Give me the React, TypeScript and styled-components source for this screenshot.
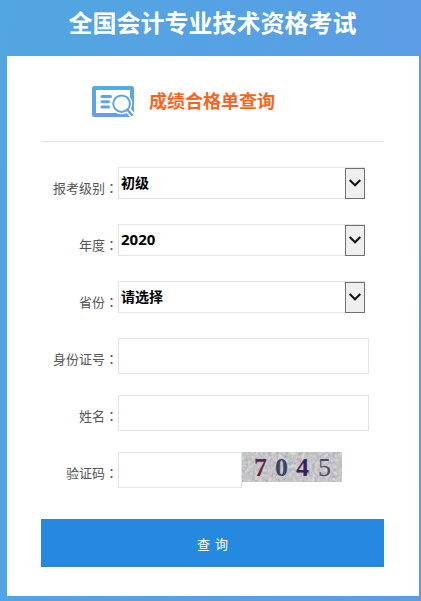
import styled, { createGlobalStyle } from 'styled-components';
import { useState } from 'react';

const GlobalStyle = createGlobalStyle`
  * {
    box-sizing: border-box;
  }
  body {
    margin: 0;
    font-family: 'Noto Sans CJK SC', sans-serif;
  }
`;

const Wrapper = styled.div`
  width: 421px;
  height: 601px;
  padding: 0 2px 0 7px;
  overflow: hidden;
  background: linear-gradient(100deg, #52a6e1 0%, #56a1e4 50%, #5f9ae7 100%);
`;

const Title = styled.h1`
  height: 56px;
  margin: 0;
  padding-right: 1px;
  font-size: 24px;
  font-weight: 700;
  line-height: 44px;
  text-align: center;
  color: #fff;
`;

const Card = styled.form`
  height: 540px;
  padding: 0 35px 0 34px;
  background-color: #fff;
`;

const Header = styled.header`
  display: flex;
  align-items: flex-start;
  gap: 15px;
  height: 86px;
  padding: 30px 0 0 51px;
  border-bottom: 1px solid #e3e3e3;
`;

const Subtitle = styled.h2`
  margin: 0;
  font-size: 18px;
  font-weight: 700;
  line-height: 28px;
  color: #f9651f;
`;

const Fields = styled.div`
  display: flex;
  flex-direction: column;
  gap: 21px;
  padding-top: 25px;
`;

const Row = styled.div`
  display: flex;
  align-items: flex-start;
  height: 36px;
`;

const Label = styled.label`
  flex: none;
  width: 77px;
  font-size: 13px;
  line-height: 41px;
  text-align: right;
  color: #555;
`;

const Colon = styled.span`
  font-family: 'Noto Sans CJK JP', sans-serif;
`;

const SelectBox = styled.div`
  display: flex;
  width: 247px;
  height: 32px;
  border: 1px solid #e3e3e3;
  border-right: none;
`;

const Select = styled.select`
  flex: 1;
  padding: 0 0 2px 2px;
  border: none;
  appearance: none;
  background: none;
  font-family: 'Noto Sans', 'Noto Sans CJK SC', sans-serif;
  font-size: ${(props: { $latin?: boolean }) => (props.$latin ? 15 : 14)}px;
  font-weight: 700;
  color: #000;
`;

const Arrow = styled.span`
  display: flex;
  justify-content: center;
  align-items: center;
  width: 20px;
  height: 31px;
  padding-bottom: 2px;
  border: 1px solid #707070;
  background-color: #efefef;
  pointer-events: none;
`;

const Input = styled.input<{ $width: number }>`
  width: ${(props) => props.$width}px;
  height: 36px;
  padding: 0 4px;
  border: 1px solid #e3e3e3;
  outline: none;
  font-size: 14px;
`;

const Captcha = styled.svg`
  display: block;
  width: 100px;
  height: 30px;
  font-family: 'Liberation Serif', serif;
  font-size: 26px;
`;

const Button = styled.button`
  display: block;
  width: 100%;
  height: 48px;
  margin-top: 31px;
  padding: 1px 0 0;
  border: none;
  border-bottom: 1px solid #3b7fb8;
  background-color: #2489df;
  font-family: 'Noto Sans CJK SC', sans-serif;
  font-size: 13px;
  word-spacing: 2px;
  color: #fff;
`;

const digits = [
  { value: '7', x: 12, color: '#5b2748', weight: 700 },
  { value: '0', x: 33, color: '#3a4660', weight: 700 },
  { value: '4', x: 54, color: '#38205f', weight: 700 },
  { value: '5', x: 76, color: '#554560', weight: 400 },
];

const selects = [
  { id: 'level', label: '报考级别', options: ['初级', '中级', '高级'] },
  { id: 'year', label: '年度', options: ['2020', '2019'], latin: true },
  { id: 'province', label: '省份', options: ['请选择'] },
];

function SearchIcon() {
  return (
    <svg width="42" height="32" viewBox="0 0 42 32" fill="none">
      <defs>
        <linearGradient id="card" gradientUnits="userSpaceOnUse" x1="0" y1="0" x2="0" y2="32">
          <stop offset="0" stopColor="#50ade0" />
          <stop offset="1" stopColor="#6c9be6" />
        </linearGradient>
      </defs>
      <rect x="2" y="2" width="38" height="27" rx="0.5" stroke="url(#card)" strokeWidth="4" />
      <g fill="url(#card)">
        <rect x="8.5" y="9" width="11.5" height="3" rx="1.5" />
        <rect x="8.5" y="14.3" width="9.5" height="3" rx="1.5" />
        <rect x="8.5" y="19.6" width="9.5" height="3" rx="1.5" />
      </g>
      <circle cx="29.6" cy="17.7" r="10.6" fill="#fff" />
      <path d="M35 23l7 8" stroke="#fff" strokeWidth="6" />
      <circle cx="29.6" cy="17.7" r="8.3" stroke="url(#card)" strokeWidth="2" />
      <path d="M35.5 24l5 5.5" stroke="url(#card)" strokeWidth="2.4" />
    </svg>
  );
}

function CaptchaImage() {
  return (
    <Captcha viewBox="0 0 100 30">
      <filter id="noise" x="0" y="0" width="100%" height="100%" colorInterpolationFilters="sRGB">
        <feTurbulence type="fractalNoise" baseFrequency="0.3" numOctaves="2" seed="4" />
        <feColorMatrix values="0.3 0.15 0 0 0.55  0.12 0.3 0 0 0.56  0.12 0.12 0.2 0 0.56  0 0 0 0 1" />
      </filter>
      <rect width="100" height="30" filter="url(#noise)" />
      {digits.map((digit) => (
        <text key={digit.value} x={digit.x} y="24" fill={digit.color} fontWeight={digit.weight}>
          {digit.value}
        </text>
      ))}
    </Captcha>
  );
}

function App() {
  const [form, setForm] = useState<Record<string, string>>({});
  const change = (id: string, value: string) => setForm((prev) => ({ ...prev, [id]: value }));
  return (
    <Wrapper>
      <GlobalStyle />
      <Title>全国会计专业技术资格考试</Title>
      <Card onSubmit={(e) => e.preventDefault()}>
        <Header>
          <SearchIcon />
          <Subtitle>成绩合格单查询</Subtitle>
        </Header>
        <Fields>
          {selects.map(({ id, label, options, latin }) => (
            <Row key={id}>
              <Label htmlFor={id}>
                {label}
                <Colon>：</Colon>
              </Label>
              <SelectBox>
                <Select
                  id={id}
                  $latin={latin}
                  value={form[id] ?? options[0]}
                  onChange={(e) => change(id, e.target.value)}
                >
                  {options.map((option) => (
                    <option key={option}>{option}</option>
                  ))}
                </Select>
                <Arrow>
                  <svg width="12" height="8" viewBox="0 0 12 8" fill="none">
                    <path d="M0.7 1l5.3 5.3L11.3 1" stroke="#111" strokeWidth="2" />
                  </svg>
                </Arrow>
              </SelectBox>
            </Row>
          ))}
          <Row>
            <Label htmlFor="card-no">
              身份证号<Colon>：</Colon>
            </Label>
            <Input id="card-no" $width={251} />
          </Row>
          <Row>
            <Label htmlFor="name">
              姓名<Colon>：</Colon>
            </Label>
            <Input id="name" $width={251} />
          </Row>
          <Row>
            <Label htmlFor="code">
              验证码<Colon>：</Colon>
            </Label>
            <Input id="code" $width={124} />
            <CaptchaImage />
          </Row>
        </Fields>
        <Button type="submit">查 询</Button>
      </Card>
    </Wrapper>
  );
}
export default App;
